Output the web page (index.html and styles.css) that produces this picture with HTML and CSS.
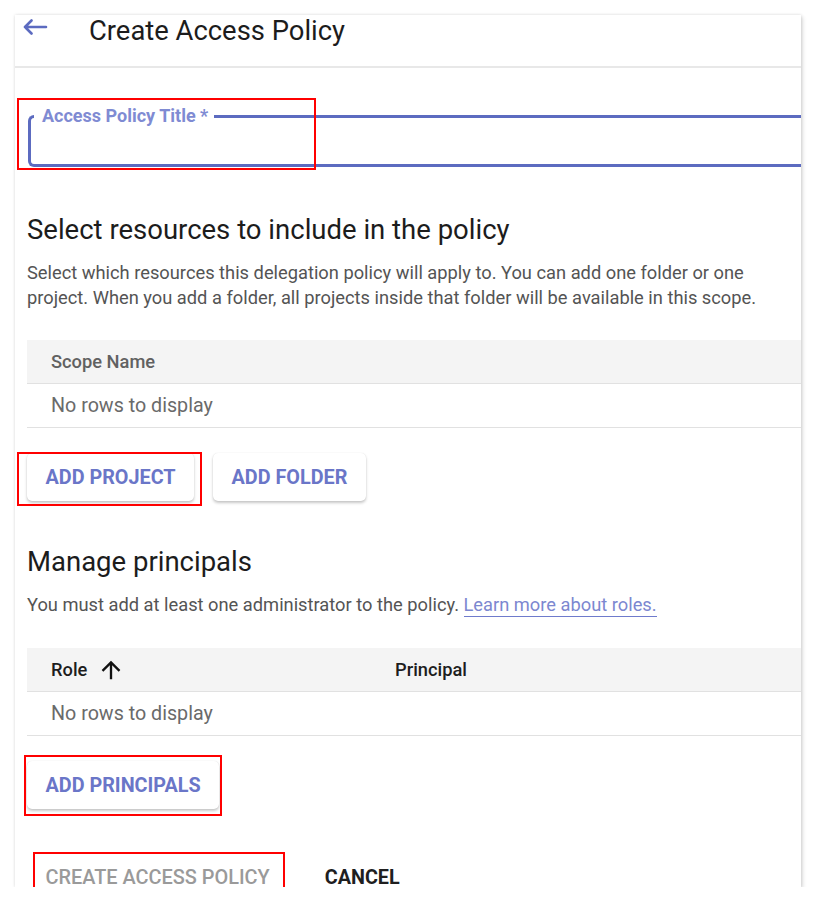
FILE: index.html
```html
<!DOCTYPE html>
<html lang="en">
<head>
<meta charset="utf-8">
<title>Create Access Policy</title>
<link rel="stylesheet" href="styles.css">
</head>
<body>
<div class="card">
  <header class="header">
    <svg class="back" width="26" height="16" viewBox="0 0 26 16" aria-hidden="true">
      <path d="M24 8H3M9.5 1.5L3 8l6.5 6.5" fill="none" stroke="#5c6bc0" stroke-width="2.6" stroke-linecap="round" stroke-linejoin="round"/>
    </svg>
    <h1 class="title">Create Access Policy</h1>
  </header>

  <div class="field-wrap">
    <fieldset class="field">
      <legend class="field-label">Access Policy Title *</legend>
    </fieldset>
  </div>

  <section class="section section-resources">
    <h2 class="section-title">Select resources to include in the policy</h2>
    <p class="section-text">Select which resources this delegation policy will apply to. You can add one folder or one project. When you add a folder, all projects inside that folder will be available in this scope.</p>
    <div class="table">
      <div class="table-head head-muted">
        <div class="cell">Scope Name</div>
      </div>
      <div class="table-row"><div class="cell">No rows to display</div></div>
    </div>
    <div class="btn-row">
      <button class="btn raised">ADD PROJECT</button>
      <button class="btn raised">ADD FOLDER</button>
    </div>
  </section>

  <section class="section section-principals">
    <h2 class="section-title">Manage principals</h2>
    <p class="section-text">You must add at least one administrator to the policy. <a class="link" href="#">Learn more about roles.</a></p>
    <div class="table">
      <div class="table-head head-dark two-col">
        <div class="cell">Role
          <svg class="sort" width="28" height="28" viewBox="0 0 24 24" aria-hidden="true"><path d="M4 12l1.41 1.41L11 7.83V20h2V7.83l5.58 5.59L20 12l-8-8-8 8z" fill="#111"/></svg>
        </div>
        <div class="cell">Principal</div>
      </div>
      <div class="table-row"><div class="cell">No rows to display</div></div>
    </div>
    <div class="btn-row btn-row-principals">
      <button class="btn raised">ADD PRINCIPALS</button>
    </div>
  </section>

  <div class="actions">
    <button class="btn flat disabled">CREATE ACCESS POLICY</button>
    <button class="btn flat cancel">CANCEL</button>
  </div>

  <div class="mark mark-title"></div>
  <div class="mark mark-project"></div>
  <div class="mark mark-principals"></div>
  <div class="mark mark-create"></div>
</div>
</body>
</html>
```

FILE: styles.css
```css
html, body {
  margin: 0;
  padding: 0;
  background: #ffffff;
}

body {
  font-family: Roboto, "Liberation Sans", Arial, sans-serif;
  color: #1f1f1f;
}

.card {
  position: relative;
  margin: 15px 0 0 15px;
  width: 786px;
  height: 872px;
  background: #fff;
  box-shadow: 0 0 3px rgba(0, 0, 0, 0.14), 2px 2px 4px rgba(0, 0, 0, 0.12);
}

/* header */
.header {
  display: flex;
  align-items: flex-start;
  height: 51px;
  border-bottom: 2px solid #e8e8e8;
  box-sizing: content-box;
}

.back {
  margin: 4px 0 0 7px;
  flex: none;
}

.title {
  margin: 0 0 0 41px;
  font-size: 27.4px;
  font-weight: 400;
  line-height: normal;
  color: #1c1c1c;
}

/* outlined field (its right side runs under the card edge) */
.field-wrap {
  overflow: hidden;
  padding-top: 38px;
}

.field {
  margin: 0 -40px 0 13px;
  padding: 0 0 0 3px;
  height: 55px;
  border: 3px solid #5c6bc0;
  border-right: 0;
  border-radius: 6px 0 0 6px;
  min-width: 0;
}

.field-label {
  padding: 0 6px 0 8px;
  font-size: 18px;
  font-weight: 700;
  line-height: 20px;
  color: #7f8bd3;
}

/* sections */
.section {
  padding-left: 12px;
}

.section-title {
  margin: 0;
  font-size: 27.5px;
  font-weight: 400;
  line-height: 32px;
  color: #1c1c1c;
}

.section-resources .section-title {
  margin-top: 47px;
}

.section-principals .section-title {
  margin-top: 45px;
}

.section-text {
  margin: 14px 0 0;
  font-size: 18.3px;
  line-height: 25px;
  color: #545454;
}

.link {
  color: #7c87d0;
  text-decoration: none;
  border-bottom: 1.5px solid #6f7bcc;
  padding-bottom: 0.5px;
}

/* tables */
.table {
  margin-top: 30px;
}

.section-principals .table {
  margin-top: 31px;
}

.table-head {
  display: grid;
  grid-template-columns: 1fr;
  height: 43px;
  align-items: center;
  background: #f4f4f4;
  border-bottom: 1px solid #e1e1e1;
  font-size: 18.3px;
  font-weight: 500;
}

.table-head.two-col {
  grid-template-columns: 344px 1fr;
}

.head-muted {
  color: #616161;
}

.head-dark {
  color: #1d1d1d;
}

.table-head .cell {
  display: flex;
  align-items: center;
}

.cell {
  padding-left: 24px;
}

.sort {
  margin-left: 10px;
}

.table-row {
  display: flex;
  align-items: center;
  height: 43px;
  border-bottom: 1px solid #e1e1e1;
  font-size: 19.7px;
  color: #6a6a6a;
}

/* buttons */
.btn-row {
  display: flex;
  gap: 19px;
  margin-top: 25px;
}

.btn-row-principals {
  margin-top: 25px;
}

.btn {
  font-family: inherit;
  font-size: 19.8px;
  font-weight: 700;
  letter-spacing: 0;
  border: 0;
  background: #fff;
  padding: 0 18.5px;
  height: 48px;
  border-radius: 5px;
  color: #6a76c8;
  cursor: pointer;
}

.raised {
  box-shadow: 0 2px 3px rgba(0, 0, 0, 0.22), 0 0 1px rgba(0, 0, 0, 0.12);
}

.actions {
  display: flex;
  gap: 18px;
  margin-top: 55px;
  padding-left: 12px;
}

.flat {
  height: 26px;
  background: transparent;
  box-shadow: none;
}

.disabled {
  color: #9a9a9a;
  font-weight: 500;
  font-size: 19.9px;
}

.cancel {
  color: #1f1f1f;
}

/* red annotation boxes */
.mark {
  position: absolute;
  border: 2.5px solid #ff0000;
  box-sizing: border-box;
  pointer-events: none;
}

.mark-title {
  left: 2px;
  top: 83px;
  width: 299px;
  height: 72px;
}

.mark-project {
  left: 2px;
  top: 437px;
  width: 185px;
  height: 54px;
}

.mark-principals {
  left: 9px;
  top: 740px;
  width: 198px;
  height: 61px;
}

.mark-create {
  left: 18px;
  top: 837px;
  width: 252px;
  height: 35px;
  border-bottom: 0;
}
```
